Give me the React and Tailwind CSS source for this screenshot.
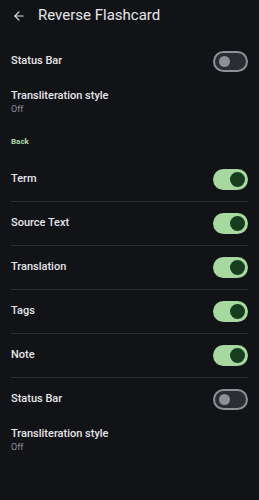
import { ArrowLeft } from "lucide-react";

function Toggle({ on }) {
  if (on) {
    return (
      <div className="w-[35px] h-[21px] rounded-full bg-[#a6d8a0] flex items-center justify-end pr-[3px] shrink-0">
        <div className="w-[15px] h-[15px] rounded-full bg-[#173d1f]" />
      </div>
    );
  }
  return (
    <div className="w-[35px] h-[21px] rounded-full bg-[#2c2d32] border-2 border-[#8e9098] flex items-center pl-[4px] shrink-0">
      <div className="w-[11px] h-[11px] rounded-full bg-[#8e9098]" />
    </div>
  );
}

function SwitchRow({ label, on, divider }) {
  return (
    <div className={divider ? "border-b border-[#2b2c31]" : ""}>
      <div className="h-[43px] flex items-center justify-between">
        <span className="text-[11px] font-medium text-[#e6e6ea]">{label}</span>
        <Toggle on={on} />
      </div>
    </div>
  );
}

function ValueRow({ label, value }) {
  return (
    <div className="pt-[6px] flex flex-col">
      <span className="text-[11px] font-medium text-[#e6e6ea] leading-[14px]">{label}</span>
      <span className="text-[9px] text-[#8f9096] leading-[12px]">{value}</span>
    </div>
  );
}

export default function App() {
  const back = [
    { label: "Term", on: true },
    { label: "Source Text", on: true },
    { label: "Translation", on: true },
    { label: "Tags", on: true },
    { label: "Note", on: true },
  ];

  return (
    <div
      className="w-[259px] h-[500px] bg-[#121317] text-white overflow-hidden"
      style={{ fontFamily: "Roboto, 'Noto Sans', sans-serif" }}
    >
      {/* Header */}
      <div className="h-[31px] flex items-center pl-[12px] gap-[12px]">
        <ArrowLeft size={14} strokeWidth={2} className="text-[#e6e6ea]" />
        <h1 className="text-[15px] text-[#e6e6ea]">Reverse Flashcard</h1>
      </div>

      <div className="px-[11px] pt-[9px]">
        <SwitchRow label="Status Bar" on={false} />
        <ValueRow label="Transliteration style" value="Off" />

        <div className="mt-[21px] mb-[10px] leading-[12px] text-[8px] font-bold text-[#b3d9ab]">Back</div>

        {back.map((r) => (
          <SwitchRow key={r.label} label={r.label} on={r.on} divider />
        ))}

        <SwitchRow label="Status Bar" on={false} />
        <ValueRow label="Transliteration style" value="Off" />
      </div>
    </div>
  );
}
